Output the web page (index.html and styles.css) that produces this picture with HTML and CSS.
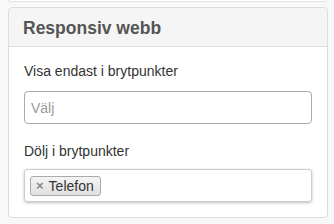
FILE: index.html
```html
<!DOCTYPE html>
<html lang="sv">
<head>
  <meta charset="UTF-8">
  <title>Responsiv webb</title>
  <link rel="stylesheet" href="styles.css">
</head>
<body>
  <div class="prevCard"></div>
  <div class="panel">
    <div class="panelHeading">Responsiv webb</div>
    <div class="panelBody">
      <label class="fieldLabel">Visa endast i brytpunkter</label>
      <div class="select">
        <span class="placeholder">Välj</span>
      </div>
      <label class="fieldLabel">Dölj i brytpunkter</label>
      <div class="select multi">
        <span class="tag"><span class="tagClose">×</span>Telefon</span>
      </div>
    </div>
  </div>
</body>
</html>
```

FILE: styles.css
```css
body {
  margin: 0;
  background: #f8f8f8;
  font-family: "Liberation Sans", Arial, sans-serif;
  color: #333;
}
.prevCard {
  margin: 0 7px 0 8px;
  height: 1px;
  background: #fff;
  border: 1px solid #e0e0e0;
  border-top: none;
  border-radius: 0 0 4px 4px;
}
.panel {
  margin: 5px 6px 0 8px;
  background: #fff;
  border: 1px solid #ddd;
  border-radius: 4px;
}
.panelHeading {
  height: 38px;
  padding: 0 14px;
  background: #f5f5f5;
  border-bottom: 1px solid #ddd;
  border-radius: 4px 4px 0 0;
  font-size: 17.5px;
  font-weight: bold;
  line-height: 40px;
  color: #555;
}
.panelBody {
  padding: 14px 15px 15px;
}
.fieldLabel {
  display: block;
  font-size: 14px;
  line-height: 20px;
  margin-bottom: 10px;
}
.select {
  height: 31px;
  border: 1px solid #aaa;
  border-radius: 4px;
  display: flex;
  align-items: center;
  padding: 0 6px;
  margin-bottom: 17px;
}
.placeholder {
  font-size: 14px;
  color: #999;
}
.select.multi {
  border-color: #ccc;
  border-radius: 3px;
  box-shadow: 0 1px 3px rgba(0, 0, 0, 0.25);
  margin-bottom: 0;
  padding: 0 5px;
}
.select + .fieldLabel {
  margin-bottom: 8px;
}
.tag {
  display: inline-flex;
  align-items: center;
  height: 18px;
  padding: 0 6px 0 5px;
  border: 1px solid #aaa;
  border-radius: 3px;
  background: linear-gradient(#f4f4f4, #e0e0e0);
  font-size: 14px;
  color: #333;
}
.tagClose {
  font-size: 13px;
  font-weight: bold;
  color: #888;
  margin-right: 5px;
}
```
